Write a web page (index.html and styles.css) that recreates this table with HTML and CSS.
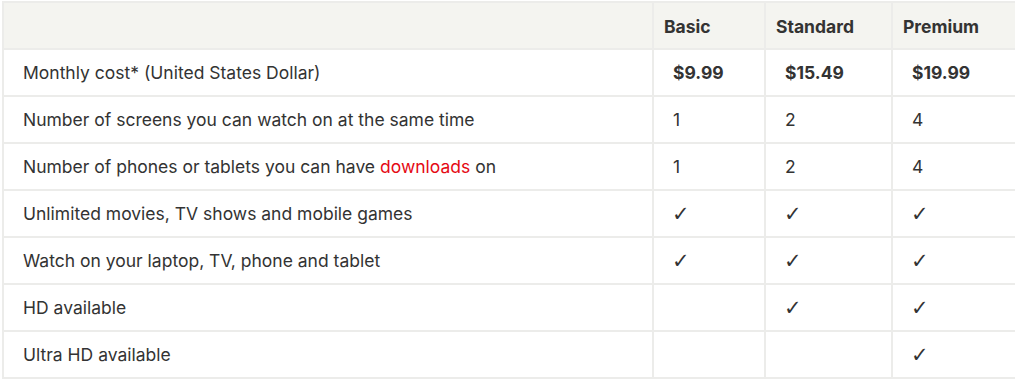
FILE: index.html
```html
<!DOCTYPE html>
<html lang="en">
<head>
    <meta charset="UTF-8">
    <title>Plans</title>
    <link rel="stylesheet" href="styles.css">
</head>
<body>
    <table class="plans">
        <colgroup>
            <col class="col-feature">
            <col class="col-basic">
            <col class="col-standard">
            <col class="col-premium">
        </colgroup>
        <thead>
            <tr>
                <th></th>
                <th>Basic</th>
                <th>Standard</th>
                <th>Premium</th>
            </tr>
        </thead>
        <tbody>
            <tr>
                <td>Monthly cost* (United States Dollar)</td>
                <td class="price">$9.99</td>
                <td class="price">$15.49</td>
                <td class="price">$19.99</td>
            </tr>
            <tr>
                <td>Number of screens you can watch on at the same time</td>
                <td>1</td>
                <td>2</td>
                <td>4</td>
            </tr>
            <tr>
                <td>Number of phones or tablets you can have <a href="#">downloads</a> on</td>
                <td>1</td>
                <td>2</td>
                <td>4</td>
            </tr>
            <tr>
                <td>Unlimited movies, TV shows and mobile games</td>
                <td class="check">&#10003;</td>
                <td class="check">&#10003;</td>
                <td class="check">&#10003;</td>
            </tr>
            <tr>
                <td>Watch on your laptop, TV, phone and tablet</td>
                <td class="check">&#10003;</td>
                <td class="check">&#10003;</td>
                <td class="check">&#10003;</td>
            </tr>
            <tr>
                <td>HD available</td>
                <td></td>
                <td class="check">&#10003;</td>
                <td class="check">&#10003;</td>
            </tr>
            <tr>
                <td>Ultra HD available</td>
                <td></td>
                <td></td>
                <td class="check">&#10003;</td>
            </tr>
        </tbody>
    </table>
</body>
</html>
```

FILE: styles.css
```css
body {
    margin: 0;
    padding: 1px 0 0 2px;
    font-family: Inter, Arial, sans-serif;
    font-size: 17.5px;
    color: #333;
    background: #fff;
    overflow: hidden;
}

.plans {
    border-collapse: collapse;
    width: 1030px;
    table-layout: fixed;
    border: 2px solid #dcdcdc;
}

.col-feature {
    width: 650px;
}

.col-basic {
    width: 112px;
}

.col-standard {
    width: 127px;
}

.plans th,
.plans td {
    border: 2px solid #ececea;
    height: 44px;
    padding: 1px 19px 0;
    line-height: 20px;
    text-align: left;
    vertical-align: middle;
}

.plans th {
    background-color: #f4f4f0;
    font-weight: 700;
    height: 43px;
    padding: 2px 10px 0;
}

.price {
    font-weight: 700;
}

.plans a {
    color: #e50914;
    text-decoration: none;
}

.plans .check {
    font-family: "DejaVu Sans", sans-serif;
    font-size: 21px;
    padding-left: 18px;
}
```
